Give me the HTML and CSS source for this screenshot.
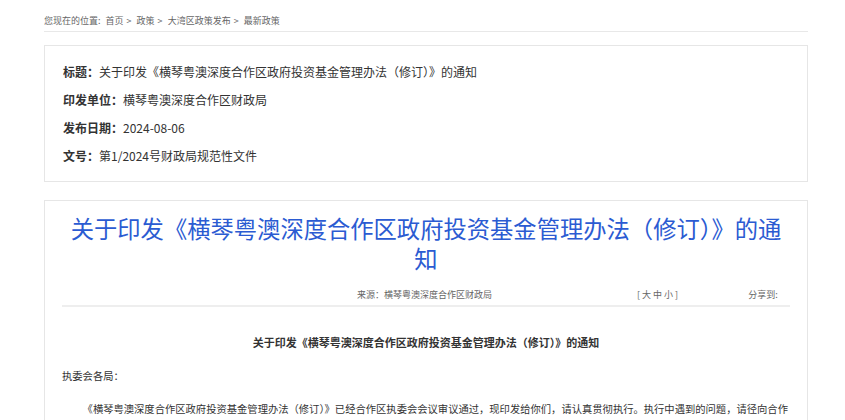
FILE: index.html
```html
<!DOCTYPE html>
<html lang="zh-CN">
<head>
<meta charset="utf-8">
<title>关于印发《横琴粤澳深度合作区政府投资基金管理办法（修订）》的通知</title>
<link rel="stylesheet" href="styles.css">
</head>
<body>
<div class="page">
  <div class="crumbs">
    <span class="crumbs-label">您现在的位置:</span>
    <a href="#">首页</a><span class="sep">&gt;</span>
    <a href="#">政策</a><span class="sep">&gt;</span>
    <a href="#">大湾区政策发布</a><span class="sep">&gt;</span>
    <a href="#">最新政策</a>
  </div>

  <div class="info">
    <div class="info-row"><span class="info-key">标题：</span>关于印发《横琴粤澳深度合作区政府投资基金管理办法（修订）》的通知</div>
    <div class="info-row"><span class="info-key">印发单位：</span>横琴粤澳深度合作区财政局</div>
    <div class="info-row"><span class="info-key">发布日期：</span>2024-08-06</div>
    <div class="info-row"><span class="info-key">文号：</span>第1/2024号财政局规范性文件</div>
  </div>

  <div class="article">
    <h1 class="article-title">关于印发《横琴粤澳深度合作区政府投资基金管理办法（修订）》的通知</h1>
    <div class="meta">
      <span class="meta-source">来源：横琴粤澳深度合作区财政局</span>
      <span class="meta-size">[ 大 中 小 ]</span>
      <span class="meta-share">分享到:</span>
    </div>
    <div class="content">
      <h2 class="content-head">关于印发《横琴粤澳深度合作区政府投资基金管理办法（修订）》的通知</h2>
      <p class="salute">执委会各局：</p>
      <p class="para">《横琴粤澳深度合作区政府投资基金管理办法（修订）》已经合作区执委会会议审议通过，现印发给你们，请认真贯彻执行。执行中遇到的问题，请径向合作区财政局反映。</p>
    </div>
  </div>
</div>
</body>
</html>
```

FILE: styles.css
```css
html, body {
  margin: 0;
  padding: 0;
  background: #fff;
}

body {
  font-family: "Noto Sans CJK SC", "Noto Sans", "Liberation Sans", sans-serif;
  color: #333;
}

.page {
  width: 764px;
  margin-left: 44px;
}

.crumbs {
  height: 32px;
  line-height: 41px;
  font-size: 9px;
  color: #666;
  border-bottom: 1px solid #e8e8e8;
  box-sizing: border-box;
  white-space: nowrap;
  overflow: hidden;
}

.crumbs a {
  color: #666;
  text-decoration: none;
}

.crumbs-label {
  margin-right: 3px;
}

.sep {
  margin: 0 3px;
}

.info {
  margin-top: 13px;
  border: 1px solid #e6e6e6;
  padding: 12px 18px 11px;
}

.info-row {
  line-height: 28px;
  font-size: 12px;
  color: #333;
}

.info-key {
  font-weight: bold;
}

.article {
  margin-top: 18px;
  border: 1px solid #e6e6e6;
  border-bottom: none;
  padding: 12px 17px 0;
  height: 207px;
  overflow: hidden;
}

.article-title {
  margin: 0;
  padding: 0 3px;
  font-size: 23.3px;
  line-height: 30px;
  font-weight: normal;
  color: #2b5bd2;
  text-align: center;
}

.meta {
  margin-top: 11px;
  display: flex;
  height: 23px;
  line-height: 21px;
  font-size: 9px;
  color: #666;
  border-bottom: 2px solid #eeeeee;
  box-sizing: border-box;
}

.meta-source {
  margin-left: 295px;
}

.meta-size {
  margin-left: 145px;
}

.meta-share {
  margin-left: 70px;
}

.content {
  font-size: 10.3px;
  color: #333;
}

.content-head {
  margin: 24px 0 0;
  font-size: 11px;
  line-height: 22px;
  font-weight: bold;
  text-align: center;
}

.salute {
  margin: 12px 0 0;
  line-height: 22px;
}

.para {
  margin: 11px 0 0;
  line-height: 22px;
  text-indent: 2em;
}
```
